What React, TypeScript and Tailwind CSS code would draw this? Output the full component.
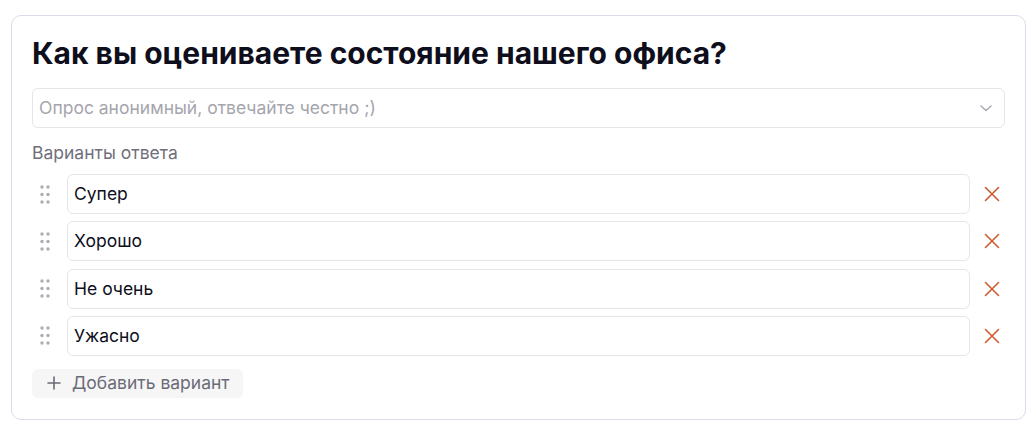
import React from "react";

const options = ["Супер", "Хорошо", "Не очень", "Ужасно"];

function Grip() {
  return (
    <svg width="12" height="19" viewBox="0 0 12 19" fill="#adadb6">
      <circle cx="3" cy="2" r="1.7" />
      <circle cx="9" cy="2" r="1.7" />
      <circle cx="3" cy="9.5" r="1.7" />
      <circle cx="9" cy="9.5" r="1.7" />
      <circle cx="3" cy="17" r="1.7" />
      <circle cx="9" cy="17" r="1.7" />
    </svg>
  );
}

function XIcon() {
  return (
    <svg width="16" height="16" viewBox="0 0 16 16" fill="none" stroke="#cf5a32" strokeWidth="1.6" strokeLinecap="round">
      <path d="M1.5 1.5 L14.5 14.5 M14.5 1.5 L1.5 14.5" />
    </svg>
  );
}

export default function App() {
  return (
    <div className="w-[1036px] h-[434px] bg-white pt-[15px] pl-[11px]" style={{ fontFamily: "Inter, 'Noto Sans', sans-serif" }}>
      <div className="w-[1015px] h-[405px] rounded-[10px] border border-[#d9dcec] px-[20px] pt-[18px]">
        <h1 className="text-[30px] leading-[38px] font-bold text-[#0e0e1c]">
          Как вы оцениваете состояние нашего офиса?
        </h1>
        <div className="mt-[16px] h-[40px] rounded-[6px] border border-[#e6e6ea] flex items-center justify-between pl-[6px] pr-[10px]">
          <span className="text-[17.5px] text-[#a5a5ad]">Опрос анонимный, отвечайте честно ;)</span>
          <svg width="16" height="16" viewBox="0 0 16 16" fill="none" stroke="#a5a5ad" strokeWidth="1.4" strokeLinecap="round" strokeLinejoin="round">
            <path d="M3 6 L8 10.5 L13 6" />
          </svg>
        </div>
        <div className="mt-[13px] text-[17.5px] leading-[24px] text-[#6f6f7b]">Варианты ответа</div>
        <div className="mt-[9px] flex flex-col gap-[7.33px]">
          {options.map((o) => (
            <div key={o} className="flex items-center">
              <div className="w-[35px] flex justify-start pl-[6.5px]">
                <Grip />
              </div>
              <div className="flex-1 h-[40px] rounded-[6px] border border-[#e6e6ea] flex items-center pl-[6px] text-[17.5px] text-[#0e0e1c]">
                {o}
              </div>
              <div className="w-[35px] flex justify-end pr-[5px]">
                <XIcon />
              </div>
            </div>
          ))}
        </div>
        <button className="mt-[13px] h-[29px] w-[211px] rounded-[6px] bg-[#f6f6f7] flex items-center pl-[15px] gap-[11px] text-[17.5px] text-[#6b6b78]">
          <svg width="14" height="14" viewBox="0 0 14 14" fill="none" stroke="#6b6b78" strokeWidth="1.6" strokeLinecap="round">
            <path d="M7 1 V13 M1 7 H13" />
          </svg>
          Добавить вариант
        </button>
      </div>
    </div>
  );
}
